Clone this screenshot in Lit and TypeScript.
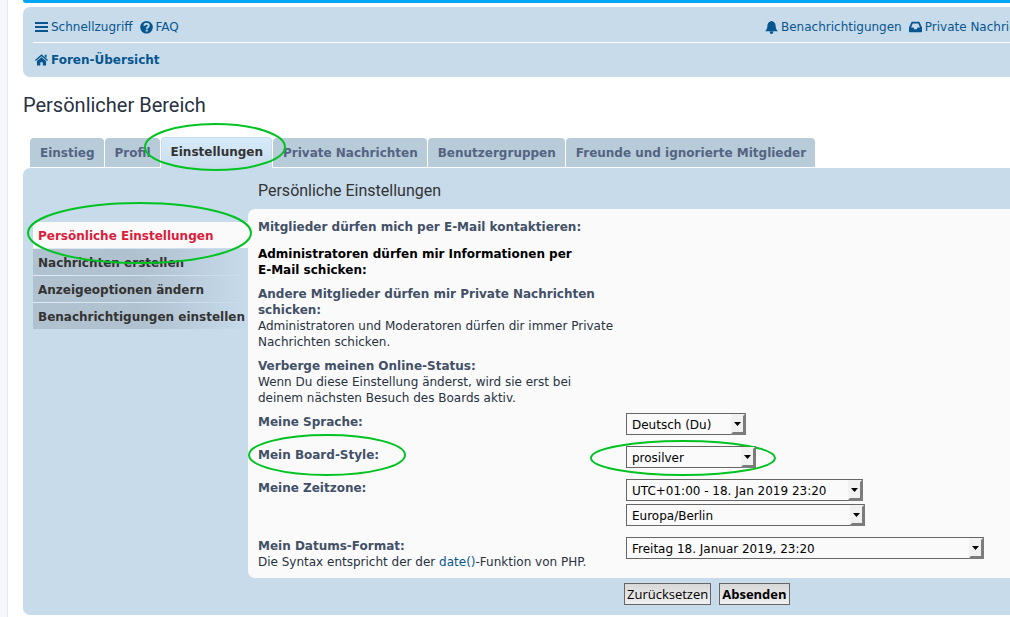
import { LitElement, html, css, svg, nothing } from "lit";
import { customElement, property } from "lit/decorators.js";

const icons = {
  bars: svg`<path d="M0 1.900h12M0 5.600h12M0 9.300h12" stroke="currentColor" stroke-width="1.900"/>`,
  help: svg`<circle cx="6" cy="5.800" r="5.800" fill="currentColor"/><path d="M4 4.400C4.100 3 5.100 2.500 6 2.500c1.100 0 2.100.7 2.100 1.800C8.100 5.800 6.200 5.600 6.200 7.200" fill="none" stroke="#c7dbeb" stroke-width="1.700"/><path d="M5.300 8h1.800v1.700H5.300z" fill="#c7dbeb"/>`,
  home: svg`<path d="M6 .3 12 5.500l-.8.9L6 2 .8 6.400 0 5.500 6 .3Z M9 .8h1.700v3L9 2.400Z M6 3l4.200 3.500v4.200H7.200V7.500H4.900v3.200H1.800V6.500L6 3Z" fill="currentColor"/>`,
  bell: svg`<path d="M6-.5c.6 0 .9.400.9.900 1.900.4 2.900 1.900 2.900 3.900 0 2.500.8 4 2.200 5.100H0c1.400-1.100 2.200-2.600 2.200-5.100 0-2 1-3.500 2.900-3.900C5.100-.1 5.400-.5 6-.5ZM4.300 9.800h3.400C7.600 11.500 6.900 12 6 12s-1.600-.5-1.700-2.200Z" fill="currentColor"/>`,
  inbox: svg`<path fill-rule="evenodd" d="M2.800.8h6.400q.5 0 .7.500L12 6v3.700q0 .6-.6.600H.6q-.6 0-.6-.6V6L2.100 1.300q.2-.5.7-.5ZM3.400 2.400 1.900 6h2.200l.8 1.500h2.200L7.900 6h2.200L8.600 2.400H3.400Z" fill="currentColor"/>`,
};

const icon = (name: keyof typeof icons) =>
  html`<svg class="icon" viewBox="0 0 12 12" width="13" height="13" aria-hidden="true">${icons[name]}</svg>`;

@customElement("board-select")
class BoardSelect extends LitElement {
  @property() label = "";
  @property() value = "";
  @property({ type: Number }) width = 120;

  static styles = css`
    :host { display: block; }
    .box { display: grid; max-width: 100%; height: 22px; }
    select {
      grid-area: 1 / 1;
      appearance: none;
      width: 100%;
      height: 22px;
      margin: 0;
      padding: 2px 18px 0 5px;
      border: 1px solid #666;
      border-radius: 0;
      background: #fafafa;
      color: #000;
      font: 12px/18px Verdana, "DejaVu Sans", sans-serif;
    }
    .arrow { grid-area: 1 / 1; justify-self: end; pointer-events: none; z-index: 1; }
  `;

  render() {
    return html`<div class="box" style="width:${this.width}px">
      <select aria-label=${this.label}><option>${this.value}</option></select>
      <svg class="arrow" width="16" height="22" viewBox="0 0 16 22" aria-hidden="true">
        <path d="M1 1h14v20H1z" fill="#f1f1f1" />
        <path d="M16 0v22H0l3-3h10V3Z" fill="#7c7c7c" />
        <path d="M4 9h7l-3.500 4Z" fill="#000" />
      </svg>
    </div>`;
  }
}

@customElement("app-root")
class AppRoot extends LitElement {
  static styles = css`
    :host {
      display: block;
      overflow: hidden;
      background: #f5f7fa;
      color: #28313f;
      font: 12px/16px Verdana, "DejaVu Sans", sans-serif;
    }
    a { color: #07568f; text-decoration: none; }
    h2, h3, dl, dt, dd, ul { margin: 0; padding: 0; }
    ul { list-style: none; }
    .wrap {
      position: relative;
      margin-left: 7px;
      padding: 0 0 2px 15px;
      border-left: 1px solid #e6e9ed;
      background: #fff;
    }
    .banner { height: 3px; border-radius: 0 0 0 7px; background: #00a5f3; }
    .navbar {
      margin-top: 4px;
      padding: 3px 0 0 10px;
      border-radius: 7px 0 0 7px;
      background: #c7dbeb;
    }
    .row { display: flex; justify-content: space-between; height: 30px; padding-top: 2px; align-items: center; }
    .row + .row { border-top: 1px solid #fff; height: 34px; padding-top: 0; }
    .links { display: flex; gap: 7px; padding-left: 2px; white-space: nowrap; }
    .links a { display: flex; align-items: center; gap: 3px; }
    .links .icon { flex: none; }
    .account { flex: 0 0 245px; overflow: hidden; }
    .crumb { font-weight: bold; }
    .title {
      margin-top: 16px;
      color: #28313f;
      font: 20px/24px "Trebuchet MS", Roboto, sans-serif;
    }
    .tabs { display: flex; gap: 1px; align-items: flex-end; height: 32px; margin-top: 19px; padding-left: 7px; }
    .tabs a {
      display: block;
      box-sizing: border-box;
      height: 29px;
      margin-bottom: 1px;
      padding: 0 9px 0 10px;
      border-radius: 4px 4px 0 0;
      background: #b8cbd9;
      color: #536482;
      font-weight: bold;
      line-height: 31px;
      white-space: nowrap;
    }
    .tabs .active {
      height: 31px;
      margin-bottom: 0;
      padding: 0 8px 0 9px;
      border: 1px solid #c7dbeb;
      border-bottom: 0;
      background: linear-gradient(#d8ebfa, #c7dbeb);
      color: #333;
      line-height: 29px;
    }
    .panel { display: flex; border-radius: 7px 0 0 7px; background: #c7dbeb; padding-bottom: 10px; }
    .menu { flex: 0 0 215px; box-sizing: border-box; padding: 54px 0 0 10px; font-weight: bold; white-space: nowrap; }
    .menu li + li { border-top: 1px solid #d5e3ee; border-image: linear-gradient(90deg, #e0ebf3, #c7dbeb) 1; }
    .menu a {
      display: block;
      padding: 6px 3px 4px 5px;
      background: linear-gradient(90deg, #b0c1cf 50%, #c7dbeb);
      color: #333;
    }
    .menu .active { background: #fafafa; color: #dc1c3c; }
    .main { flex: 1; min-width: 0; }
    .main h3 { padding: 12px 10px 7px; color: #333; font: 16px/22px "Trebuchet MS", Roboto, sans-serif; }
    .form { display: grid; gap: 7px; padding: 9px 0 8px 10px; border-radius: 7px 0 0 7px; background: #fafafa; }
    .field { display: grid; grid-template-columns: 368px 1fr; min-height: 20px; }
    .field dt { padding: 1px 8px 0 0; }
    .name { display: block; color: #425067; font-weight: bold; }
    .strong { color: #000; max-width: 325px; }
    .field dd { display: grid; gap: 3px; align-content: start; padding-bottom: 4px; }
    .actions { display: flex; gap: 8px; padding: 5px 0 0 376px; }
    button {
      height: 22px;
      margin: 0;
      padding: 0 2px;
      border: 1px solid #666;
      border-radius: 0;
      background: linear-gradient(#d8d8d8, #efefef);
      color: #000;
      font: 13px/20px "Lucida Grande", "Open Sans", sans-serif;
    }
    .submit { font-weight: bold; }
    .marks { position: absolute; left: -8px; top: 0; width: 1010px; height: 617px; pointer-events: none; }
  `;

  field(name: string, hint: unknown, selects: [string, number][] = [], strong = false) {
    return html`<dl class="field">
      <dt><span class="name ${strong ? "strong" : ""}">${name}</span>${hint}</dt>
      ${selects.length
        ? html`<dd>${selects.map(([v, w]) => html`<board-select .label=${name} .value=${v} .width=${w}></board-select>`)}</dd>`
        : nothing}
    </dl>`;
  }

  render() {
    const tabs = ["Einstieg", "Profil", "Einstellungen", "Private Nachrichten", "Benutzergruppen", "Freunde und ignorierte Mitglieder"];
    const menu = ["Persönliche Einstellungen", "Nachrichten erstellen", "Anzeigeoptionen ändern", "Benachrichtigungen einstellen"];
    return html`<div class="wrap">
      <div class="banner"></div>
      <nav class="navbar">
        <div class="row">
          <div class="links">
            <a href="#">${icon("bars")}Schnellzugriff</a>
            <a href="#">${icon("help")}FAQ</a>
          </div>
          <div class="links account">
            <a href="#">${icon("bell")}Benachrichtigungen</a>
            <a href="#">${icon("inbox")}Private Nachrichten</a>
          </div>
        </div>
        <div class="row"><div class="links crumb"><a href="#">${icon("home")}Foren-Übersicht</a></div></div>
      </nav>
      <h2 class="title">Persönlicher Bereich</h2>
      <nav class="tabs">${tabs.map((t, i) => html`<a href="#" class=${i === 2 ? "active" : ""}>${t}</a>`)}</nav>
      <div class="panel">
        <ul class="menu">${menu.map((t, i) => html`<li><a href="#" class=${i === 0 ? "active" : ""}>${t}</a></li>`)}</ul>
        <form class="main" @submit=${(e: Event) => e.preventDefault()}>
          <h3>Persönliche Einstellungen</h3>
          <div class="form">
            ${this.field("Mitglieder dürfen mich per E-Mail kontaktieren:", nothing)}
            ${this.field("Administratoren dürfen mir Informationen per E-Mail schicken:", nothing, [], true)}
            ${this.field("Andere Mitglieder dürfen mir Private Nachrichten schicken:", "Administratoren und Moderatoren dürfen dir immer Private Nachrichten schicken.")}
            ${this.field("Verberge meinen Online-Status:", "Wenn Du diese Einstellung änderst, wird sie erst bei deinem nächsten Besuch des Boards aktiv.")}
            ${this.field("Meine Sprache:", nothing, [["Deutsch (Du)", 120]])}
            ${this.field("Mein Board-Style:", nothing, [["prosilver", 130]])}
            ${this.field("Meine Zeitzone:", nothing, [["UTC+01:00 - 18. Jan 2019 23:20", 237], ["Europa/Berlin", 239]])}
            ${this.field("Mein Datums-Format:", html`Die Syntax entspricht der der <a href="#">date()</a>-Funktion von PHP.`, [["Freitag 18. Januar 2019, 23:20", 358]])}
          </div>
          <div class="actions">
            <button type="reset">Zurücksetzen</button>
            <button type="submit" class="submit">Absenden</button>
          </div>
        </form>
      </div>
      <svg class="marks" viewBox="0 0 1010 617" fill="none" stroke="#00c322" stroke-width="2" aria-hidden="true">
        <ellipse cx="215" cy="147" rx="70" ry="23" />
        <ellipse cx="139.500" cy="233" rx="111.500" ry="30" />
        <ellipse cx="327" cy="455" rx="78" ry="20" />
        <ellipse cx="683" cy="458" rx="92" ry="17" />
      </svg>
    </div>`;
  }
}
